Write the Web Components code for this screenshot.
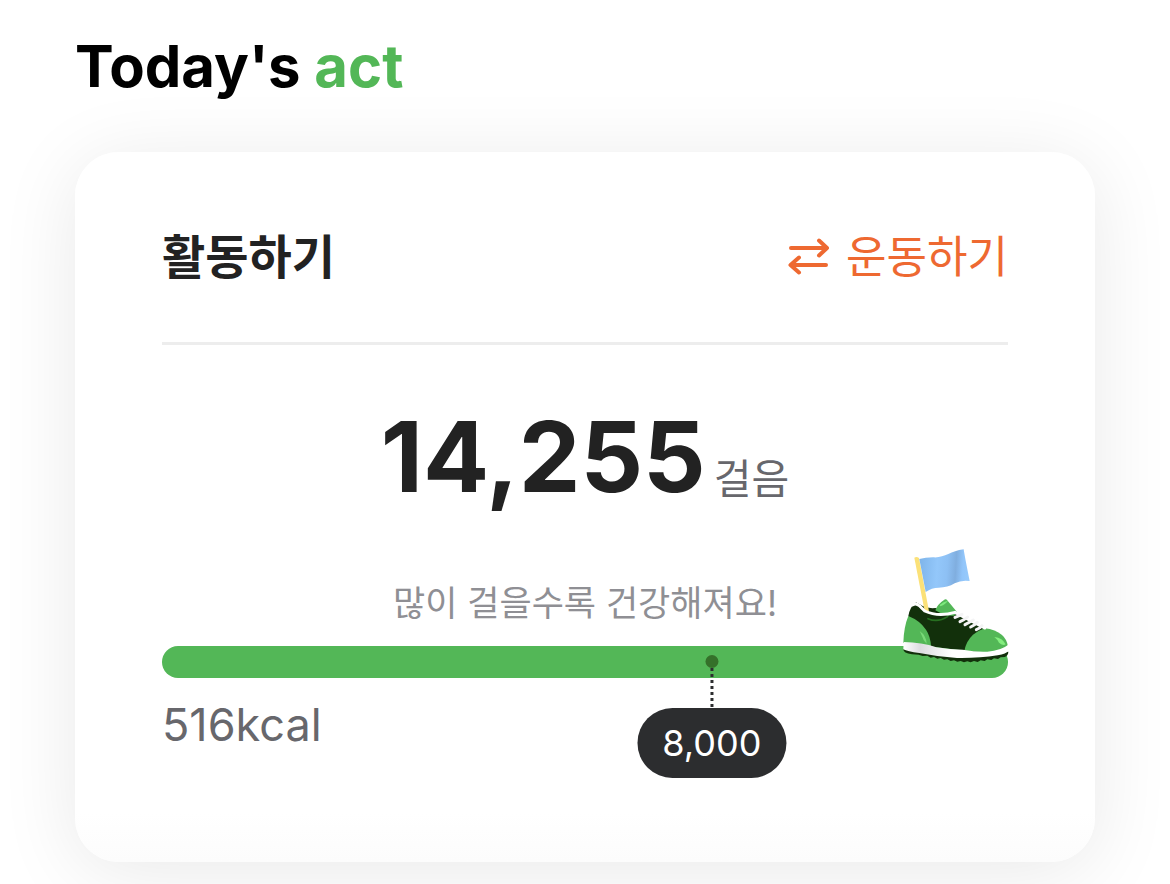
<!DOCTYPE html>
<html lang="ko">
<head>
<meta charset="utf-8">
<meta name="viewport" content="width=device-width, initial-scale=1">
<title>Today's act</title>
<style>
  html { background: #fff; }
  body {
    margin: 0;
    overflow-x: hidden;
    font-family: Inter, "Noto Sans CJK KR", sans-serif;
    color: #222;
    --green: #53b757;
    --orange: #ee6931;
    --ink: #2c2d2f;
    --muted: #67676c;
    --faint: #8f8f94;
  }
</style>
</head>
<body>
<act-page>
  <page-title slot="title">Today's <span>act</span></page-title>
  <act-card>
    <span slot="heading">활동하기</span>
    <swap-button slot="action">운동하기</swap-button>
    <step-count unit="걸음">14,255</step-count>
    <step-progress goal="8,000">
      <span slot="message">많이 걸을수록 건강해져요!</span>
      <span slot="energy">516kcal</span>
    </step-progress>
  </act-card>
</act-page>

<script>
const define = (name, html) => {
  const template = document.createElement('template');
  template.innerHTML = html;
  customElements.define(name, class extends HTMLElement {
    constructor() {
      super();
      this.attachShadow({ mode: 'open' }).append(template.content.cloneNode(true));
    }
    connectedCallback() {
      for (const el of this.shadowRoot.querySelectorAll('[data-attr]'))
        el.textContent = this.getAttribute(el.dataset.attr);
    }
  });
};

define('act-page', `
  <style>
    :host { display: block; padding: 30px 75px 22px; }
  </style>
  <slot name="title"></slot>
  <main><slot></slot></main>`);

define('page-title', `
  <style>
    :host { display: block; margin-bottom: 50px; }
    h1 { margin: 0; font-size: 58px; line-height: 72px; font-weight: 700; color: #000; }
    ::slotted(span) { color: var(--green); }
  </style>
  <h1><slot></slot></h1>`);

define('act-card', `
  <style>
    :host {
      display: block;
      padding: 72px 87px 110px;
      border-radius: 44px;
      background: linear-gradient(#fff, #fff calc(100% - 50px), #fcfcfc);
      box-shadow: 0 10px 80px rgba(0, 0, 0, .09);
    }
    header {
      display: flex;
      align-items: center;
      justify-content: space-between;
      padding-bottom: 52px;
      border-bottom: 3px solid #ededed;
    }
    h2 { margin: 0; font-size: 47px; line-height: 66px; font-weight: 700; }
  </style>
  <header>
    <h2><slot name="heading"></slot></h2>
    <slot name="action"></slot>
  </header>
  <slot></slot>`);

define('swap-button', `
  <style>
    :host { display: block; }
    button {
      display: flex;
      align-items: center;
      gap: 16px;
      padding: 0;
      border: 0;
      background: none;
      color: var(--orange);
      font: inherit;
      font-size: 44px;
      line-height: 66px;
      cursor: pointer;
    }
    svg { display: block; width: 42px; height: 38px; }
  </style>
  <button type="button">
    <svg viewBox="0 0 42 38" fill="none" stroke="currentColor" stroke-width="4" stroke-linecap="round" stroke-linejoin="round" aria-hidden="true">
      <path d="M3 10H38M31 2.500l8 7.500-8 7.500M38 27H3M11 19.500l-8.500 7.500 8.500 7.500"/>
    </svg>
    <span><slot></slot></span>
  </button>`);

define('step-count', `
  <style>
    :host { display: block; margin-top: 53px; }
    p { display: flex; align-items: flex-end; justify-content: center; gap: 8px; margin: 0; }
    strong { font-size: 98px; line-height: 118px; font-weight: 700; }
    span { font-size: 41px; line-height: 74px; color: var(--muted); }
  </style>
  <p><strong><slot></slot></strong><span data-attr="unit"></span></p>`);

define('shoe-flag', `
  <style>
    :host { display: block; width: 108px; height: 116px; }
    svg { display: block; width: 100%; height: 100%; }
  </style>
  <svg viewBox="50 36 324 348" aria-hidden="true">
    <defs>
      <linearGradient id="flag" x1="102" x2="253" y1="100" y2="110" gradientUnits="userSpaceOnUse">
        <stop offset="0" stop-color="#7fb5ea"/>
        <stop offset=".35" stop-color="#93c7fa"/>
        <stop offset=".55" stop-color="#8dc0f4"/>
        <stop offset=".72" stop-color="#80aedf"/>
        <stop offset=".86" stop-color="#91c5fa"/>
        <stop offset="1" stop-color="#97cafb"/>
      </linearGradient>
      <linearGradient id="sole" x1="54" x2="200" y1="0" y2="0" gradientUnits="userSpaceOnUse">
        <stop offset="0" stop-color="#fff"/>
        <stop offset=".35" stop-color="#dcdce0"/>
        <stop offset="1" stop-color="#fff"/>
      </linearGradient>
    </defs>
    <path fill="#12300b" d="M54 343L369 350Q369 361 358 366L346 367 338 372 326 370 318 375 306 373 298 378 286 376 277 381 266 378 256 382 246 379 236 382 226 378 216 380 206 376 196 378 186 373 176 374 166 369 156 371 146 366 136 368 126 362 112 363 100 359 80 358Q54 355 54 343Z"/>
    <path fill="#12300b" d="M69 243Q74 215 92 202L112 213Q128 221 150 219L208 234L298 280L240 347L130 334Z"/>
    <path fill="#53b757" d="M150 226Q157 207 176 195Q181 190 187 197L215 231L207 242Q181 245 150 226Z"/>
    <path fill="#7de97d" d="M163 210Q174 200 188 197Q182 207 165 214Z"/>
    <path fill="#53b757" d="M69 243Q104 257 122 284Q136 305 137 334L54 324Q55 277 69 243Z"/>
    <path fill="#53b757" d="M298 280Q330 283 350 300Q365 313 368 335Q335 353 292 352L237 347Q242 319 263 299Q278 287 298 280Z"/>
    <path fill="#83ee7e" d="M327 306Q352 309 361 328Q354 334 341 323Q337 314 327 306Z"/>
    <path fill="#79d978" d="M103 288Q123 302 124 326Q113 316 111 305Z"/>
    <path fill="none" stroke="#276f20" stroke-width="5" stroke-linecap="round" d="M128 251Q157 264 187 245"/>
    <path fill="url(#sole)" d="M55 321Q110 322 153 337Q196 344 232 344Q275 352 306 350Q348 346 369 329V348Q363 356 337 361Q280 370 215 369Q156 365 102 354Q66 350 54 343Z"/>
    <path fill="#fbe178" d="M87 68Q94 64 101 69L131 229Q125 234 118 229Z"/>
    <path fill="url(#flag)" d="M102 72Q120 68 143 67C177 70 194 48 235 43Q239 69 253 138Q229 134 208 145Q187 158 160 158Q139 158 121 171Z"/>
    <path fill="none" stroke="#fff" stroke-width="9" stroke-linecap="round" stroke-linejoin="round" d="M82 210Q91 202 103 213L118 228Q159 247 209 232L298 279"/>
    <path fill="none" stroke="#f4f4f5" stroke-width="9" stroke-linecap="round" stroke-linejoin="round" d="M209 247Q221 242 230 238M224 260Q238 254 247 246M239 269Q250 263 264 255M256 276Q269 270 276 262M273 284Q283 280 290 272"/>
  </svg>`);

define('goal-marker', `
  <style>
    :host { display: flex; flex-direction: column; align-items: center; }
    i { width: 13px; height: 13px; border-radius: 50%; background: #35712a; }
    b {
      width: 3px;
      height: 40px;
      background: repeating-linear-gradient(var(--ink) 0 3px, transparent 3px 6px);
    }
    span {
      padding: 0 25px;
      border-radius: 35px;
      background: var(--ink);
      color: #fff;
      font-size: 36px;
      line-height: 70px;
    }
  </style>
  <i></i><b></b><span><slot></slot></span>`);

define('step-progress', `
  <style>
    :host { display: block; margin-top: 62px; }
    p { margin: 0; }
    .message { font-size: 35px; line-height: 50px; text-align: center; color: var(--faint); }
    .bar { position: relative; height: 32px; margin: 18px 0 20px; border-radius: 16px; background: var(--green); }
    shoe-flag { position: absolute; right: -2px; bottom: 15px; }
    goal-marker { position: absolute; left: 65%; top: 9px; transform: translateX(-50%); }
    .energy { font-size: 45px; line-height: 54px; color: var(--muted); }
  </style>
  <p class="message"><slot name="message"></slot></p>
  <div class="bar" role="progressbar" aria-label="걸음" aria-valuenow="100">
    <goal-marker><span data-attr="goal"></span></goal-marker>
    <shoe-flag></shoe-flag>
  </div>
  <p class="energy"><slot name="energy"></slot></p>`);
</script>
</body>
</html>
